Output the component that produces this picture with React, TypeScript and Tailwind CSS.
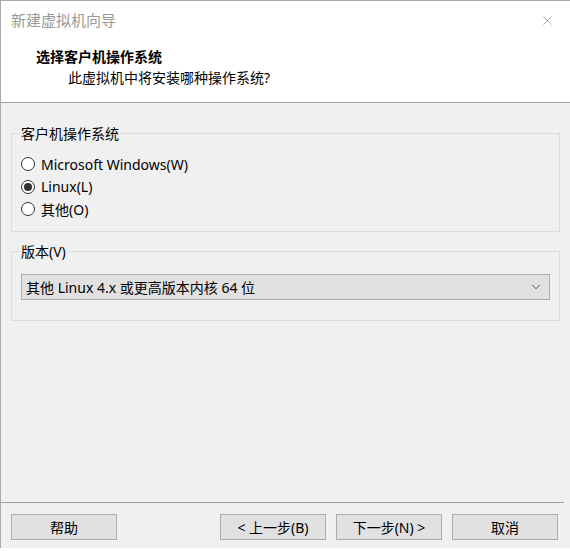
import { ChevronDown, X } from "lucide-react";

const font = { fontFamily: '"Microsoft YaHei UI", "Noto Sans", "Noto Sans CJK SC", sans-serif' };

function Radio({ label, checked }: { label: string; checked?: boolean }) {
    return (
        <label className="flex items-center h-[22.5px] gap-[6px]">
            <span className="w-[14px] h-[14px] rounded-full border border-[#333] bg-white flex items-center justify-center">
                {checked && <span className="w-[8px] h-[8px] rounded-full bg-[#333]" />}
            </span>
            <span className="text-[14px] text-black">{label}</span>
        </label>
    );
}

function Btn({ label, className = "" }: { label: string; className?: string }) {
    return (
        <button className={`h-[26px] w-[106px] bg-[#e1e1e1] border border-[#adadad] text-[14px] text-black ${className}`}>
            {label}
        </button>
    );
}

export default function App() {
    return (
        <div className="w-[570px] h-[551px] bg-white flex flex-col" style={font}>
            <div className="h-[548px] border-t border-l border-[#aaa] bg-[#f0f0f0] flex flex-col">
                {/* 标题栏 + 头部 */}
                <div className="bg-white h-[102px] border-b border-[#a0a0a0] flex flex-col">
                    <div className="h-[38px] flex items-center justify-between pl-[10px] pr-[15px]">
                        <span className="text-[15px] text-[#999]">新建虚拟机向导</span>
                        <X className="w-[15px] h-[15px] text-[#777]" strokeWidth={1} />
                    </div>
                    <div className="pl-[35px] text-[14px] font-bold text-black leading-[20px] mt-[8px]">选择客户机操作系统</div>
                    <div className="pl-[67px] text-[14px] text-black leading-[20px] mt-[1px]">此虚拟机中将安装哪种操作系统?</div>
                </div>

                <div className="flex-1 px-[10px] pt-[20px] flex flex-col">
                    <fieldset className="border border-[#dcdcdc] h-[109px] px-[9px] pt-[9px]">
                        <legend className="text-[14px] text-black px-[1px] -ml-[1px]">客户机操作系统</legend>
                        <Radio label="Microsoft Windows(W)" />
                        <Radio label="Linux(L)" checked />
                        <Radio label="其他(O)" />
                    </fieldset>

                    <fieldset className="border border-[#dcdcdc] h-[80px] mt-[9px] px-[9px] pt-[12px]">
                        <legend className="text-[14px] text-black px-[1px] -ml-[1px]">版本(V)</legend>
                        <div className="h-[26px] bg-[#e1e1e1] border border-[#adadad] flex items-center justify-between pl-[4px] pr-[6px]">
                            <span className="text-[14px] text-black">其他 Linux 4.x 或更高版本内核 64 位</span>
                            <ChevronDown className="w-[14px] h-[14px] text-[#444]" strokeWidth={1.5} />
                        </div>
                    </fieldset>

                    <div className="flex-1" />
                </div>

                <div className="border-t border-[#a0a0a0] mr-[6px] h-[46px] flex items-start pt-[11px] pl-[10px] pr-[6px]">
                    <Btn label="帮助" />
                    <div className="flex-1" />
                    <Btn label="< 上一步(B)" />
                    <Btn label="下一步(N) >" className="ml-[10px]" />
                    <Btn label="取消" className="ml-[10px]" />
                </div>
            </div>
        </div>
    );
}
